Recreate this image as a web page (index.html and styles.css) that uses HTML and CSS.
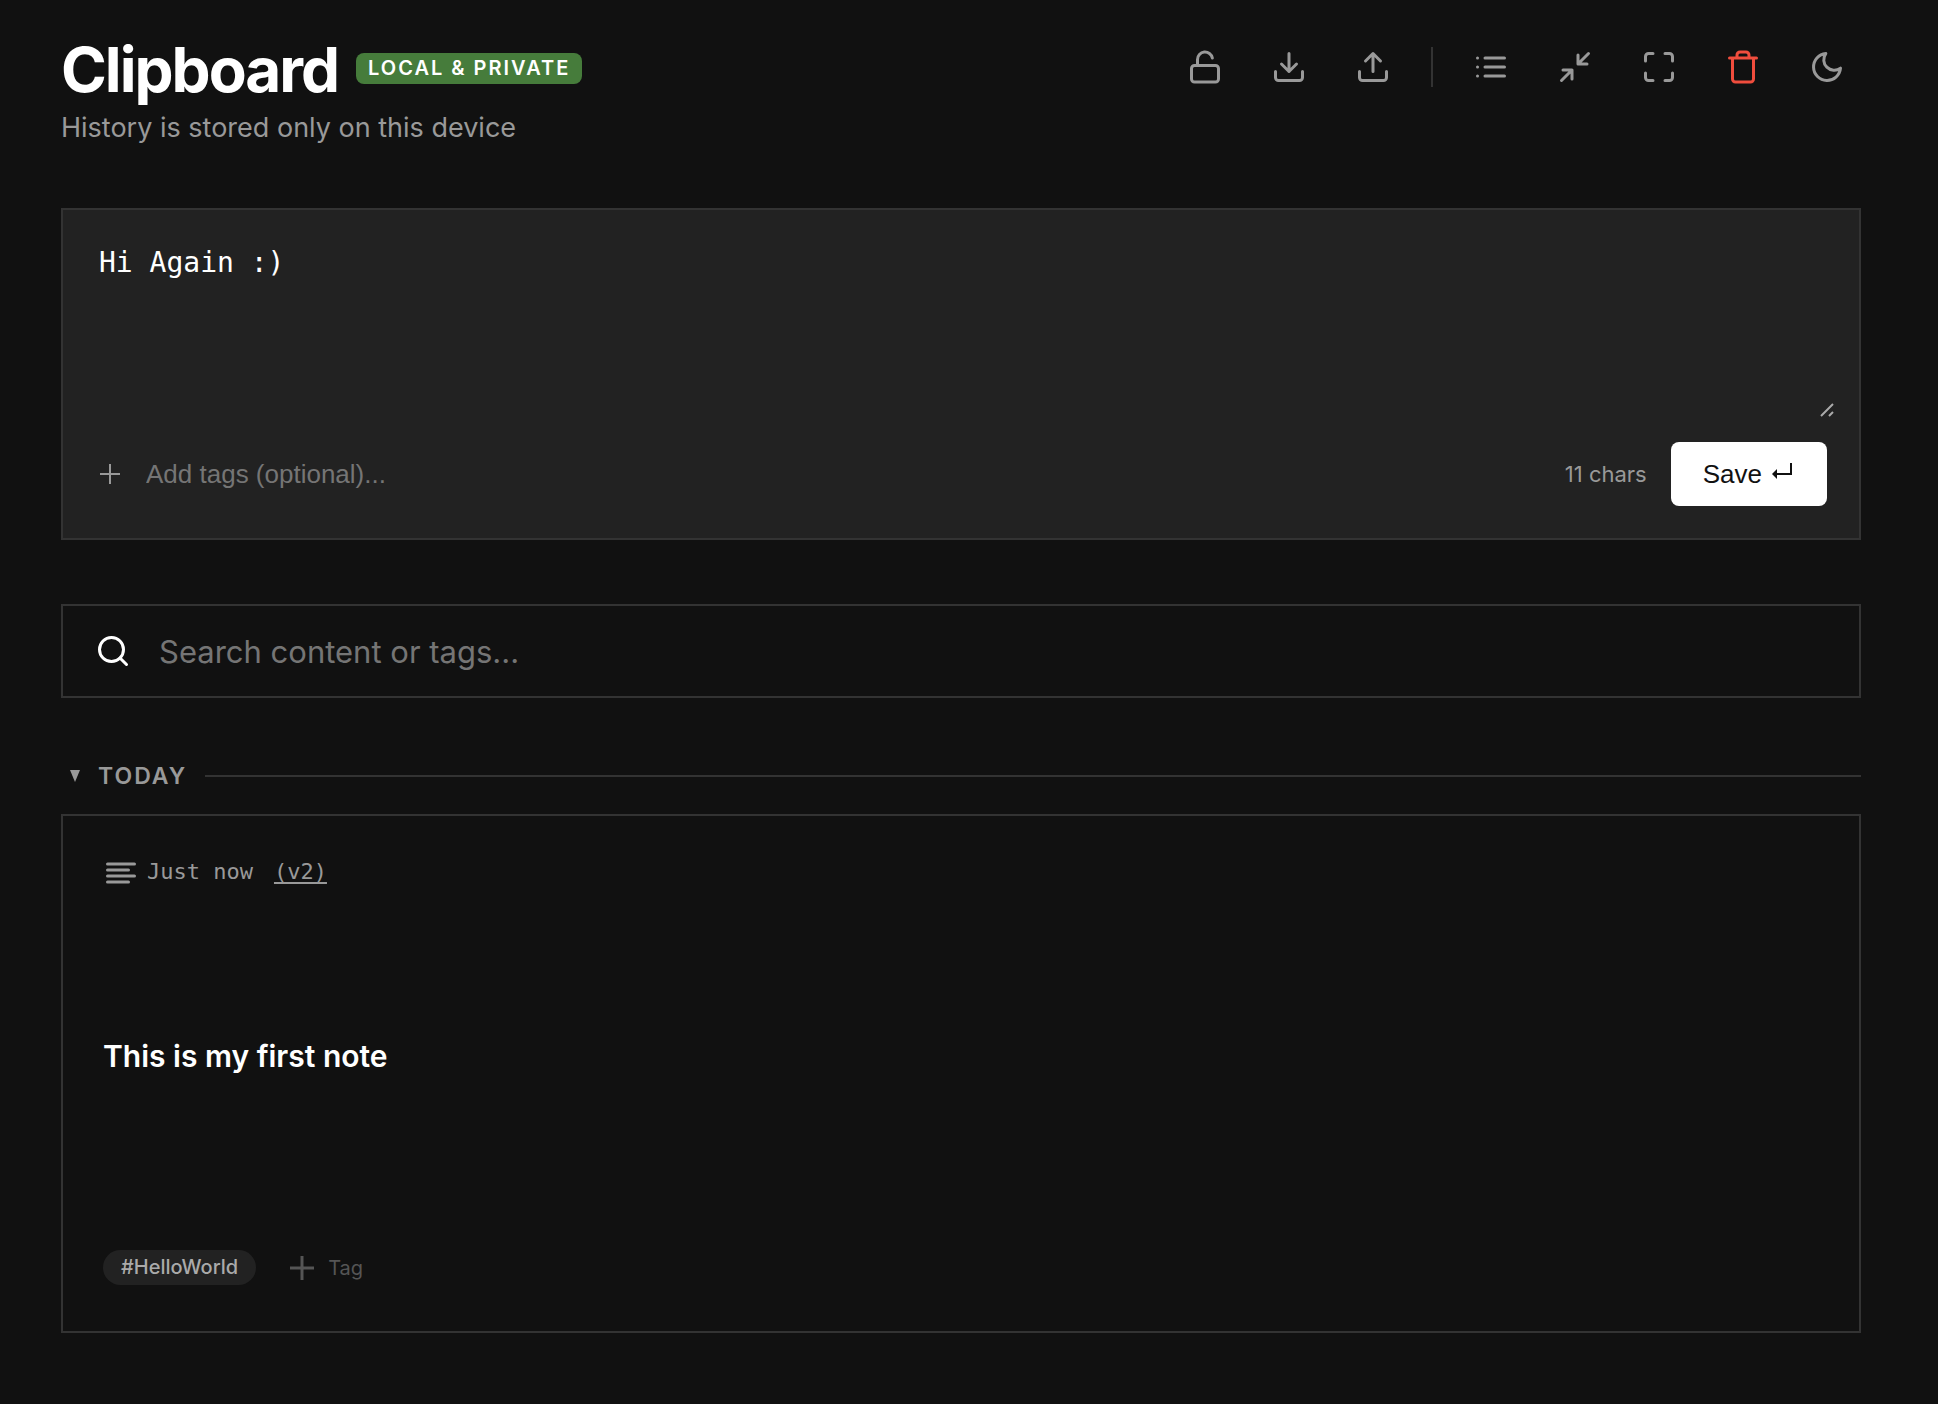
FILE: index.html
```html
<!DOCTYPE html>
<html lang="en">
<head>
    <meta charset="UTF-8">
    <meta name="viewport" content="width=device-width, initial-scale=1.0">
    <title>Clipboard</title>
    <link rel="stylesheet" href="styles.css">
</head>
<body>
    <header class="header">
        <div class="brand">
            <div class="title-row">
                <h1>Clipboard</h1>
                <span class="badge">LOCAL &amp; PRIVATE</span>
            </div>
            <p class="subtitle">History is stored only on this device</p>
        </div>
        <div class="toolbar">
            <button class="icon-button" type="button" aria-label="Lock">
                <svg class="icon" viewBox="0 0 24 24"><rect x="3" y="11" width="18" height="11" rx="2"/><path d="M7 11V7a5 5 0 0 1 9.9-1"/></svg>
            </button>
            <button class="icon-button" type="button" aria-label="Export">
                <svg class="icon" viewBox="0 0 24 24"><path d="M21 15v4a2 2 0 0 1-2 2H5a2 2 0 0 1-2-2v-4M7 10l5 5 5-5M12 15V3"/></svg>
            </button>
            <button class="icon-button" type="button" aria-label="Import">
                <svg class="icon" viewBox="0 0 24 24"><path d="M21 15v4a2 2 0 0 1-2 2H5a2 2 0 0 1-2-2v-4M17 8l-5-5-5 5M12 3v12"/></svg>
            </button>
            <span class="separator"></span>
            <button class="icon-button" type="button" aria-label="List view">
                <svg class="icon" viewBox="0 0 24 24"><path d="M8 6h13M8 12h13M8 18h13M3 6h.01M3 12h.01M3 18h.01"/></svg>
            </button>
            <button class="icon-button" type="button" aria-label="Compact">
                <svg class="icon" viewBox="0 0 24 24"><path d="M4 14h6v6M20 10h-6V4M14 10l7-7M3 21l7-7"/></svg>
            </button>
            <button class="icon-button" type="button" aria-label="Fullscreen">
                <svg class="icon" viewBox="0 0 24 24"><path d="M8 3H5a2 2 0 0 0-2 2v3m18 0V5a2 2 0 0 0-2-2h-3m0 18h3a2 2 0 0 0 2-2v-3M3 16v3a2 2 0 0 0 2 2h3"/></svg>
            </button>
            <button class="icon-button danger" type="button" aria-label="Clear all">
                <svg class="icon" viewBox="0 0 24 24"><path d="M3 6h18M19 6v14a2 2 0 0 1-2 2H7a2 2 0 0 1-2-2V6m3 0V4a2 2 0 0 1 2-2h4a2 2 0 0 1 2 2v2"/></svg>
            </button>
            <button class="icon-button" type="button" aria-label="Dark mode">
                <svg class="icon" viewBox="0 0 24 24"><path d="M21 12.79A9 9 0 1 1 11.21 3 7 7 0 0 0 21 12.79z"/></svg>
            </button>
        </div>
    </header>

    <main>
        <form class="composer">
            <div class="editor">
                <textarea id="noteInput" aria-label="Note">Hi Again :)</textarea>
                <svg class="resize-handle" viewBox="0 0 14 14"><path d="M1 13L13 1M9 13l4-4"/></svg>
            </div>
            <div class="composer-footer">
                <label class="tag-field">
                    <svg class="plus" viewBox="0 0 24 24"><path d="M12 2v20M2 12h20"/></svg>
                    <input id="tagInput" type="text" placeholder="Add tags (optional)..." aria-label="Tags">
                </label>
                <span class="char-count">11 chars</span>
                <button class="save-button" type="button">Save
                    <svg class="return" viewBox="0 0 20 16"><path class="line" d="M19 0v11H4"/><path class="head" d="M0 11l5-5v10z"/></svg>
                </button>
            </div>
        </form>

        <label class="search">
            <svg class="icon" viewBox="0 0 24 24"><circle cx="11" cy="11" r="8"/><path d="M21 21l-4.35-4.35"/></svg>
            <input id="searchInput" type="text" placeholder="Search content or tags..." aria-label="Search">
        </label>

        <section>
            <button class="group-header" type="button">
                <svg class="triangle" viewBox="0 0 10 12"><path d="M0 0h10L5 12z"/></svg>
                <span>TODAY</span>
                <span class="rule"></span>
            </button>
            <article class="card">
                <div class="card-meta">
                    <svg class="icon" viewBox="0 0 24 24"><path d="M21 6.6H3M17 10.6H3M21 14.6H3M17 18.6H3"/></svg>
                    <span>Just now</span>
                    <a href="#">(v2)</a>
                </div>
                <h2>This is my first note</h2>
                <div class="card-tags">
                    <span class="tag">#HelloWorld</span>
                    <button class="add-tag" type="button">
                        <svg class="plus" viewBox="0 0 24 24"><path d="M12 0v24M0 12h24"/></svg>
                        Tag
                    </button>
                </div>
            </article>
        </section>
    </main>
</body>
</html>
```
FILE: styles.css
```css
* {
    box-sizing: border-box;
}

body {
    margin: 0;
    padding: 32px 77px 64px 61px;
    background-color: #111;
    color: white;
    font-family: Inter, sans-serif;
}

h1, h2, p {
    margin: 0;
}

button, input, textarea {
    border: none;
    background: none;
    padding: 0;
    color: inherit;
    font-family: inherit;
    outline: none;
}

button {
    cursor: pointer;
}

svg {
    display: block;
    flex: none;
    fill: none;
    stroke: currentColor;
}

.icon {
    width: 36px;
    height: 36px;
    stroke-width: 2;
    stroke-linecap: round;
    stroke-linejoin: round;
}

.header {
    display: flex;
    justify-content: space-between;
    align-items: flex-start;
    margin-bottom: 60px;
}

.title-row {
    display: flex;
    align-items: center;
    gap: 18px;
}

h1 {
    font-size: 62px;
    line-height: 76px;
    font-weight: 700;
    letter-spacing: -2px;
}

.badge {
    margin-bottom: 3px;
    padding: 0 12px;
    border-radius: 8px;
    background-color: #467c3b;
    font-size: 20px;
    line-height: 31px;
    font-weight: 600;
    letter-spacing: 2px;
}

.subtitle {
    color: #999;
    font-size: 27px;
    line-height: 40px;
}

.toolbar {
    display: flex;
    align-items: center;
    gap: 16px;
}

.icon-button {
    display: flex;
    align-items: center;
    justify-content: center;
    width: 68px;
    height: 70px;
    color: #999;
}

.icon-button.danger {
    color: #f04d3d;
}

.separator {
    width: 2px;
    height: 40px;
    margin: 0 8px;
    background-color: #333;
}

.composer {
    margin-bottom: 64px;
    padding: 24px 24px 32px;
    border: 2px solid #333;
    background-color: #222;
}

.editor {
    position: relative;
    margin-bottom: 24px;
}

textarea {
    display: block;
    width: 100%;
    height: 184px;
    padding: 8px 12px;
    resize: none;
    font-family: "DejaVu Sans Mono", monospace;
    font-size: 28px;
    line-height: 42px;
}

.resize-handle {
    position: absolute;
    right: 1px;
    bottom: 1px;
    width: 14px;
    height: 14px;
    color: #aaa;
    stroke-width: 2;
}

.composer-footer {
    display: flex;
    align-items: center;
    gap: 24px;
    padding: 0 8px 0 11px;
}

.tag-field {
    display: flex;
    flex: 1;
    align-items: center;
    gap: 24px;
    color: #999;
}

.plus {
    width: 24px;
    height: 24px;
    stroke-width: 3;
}

.tag-field .plus {
    stroke-width: 2;
}

.tag-field input {
    flex: 1;
    font-family: "Liberation Sans", Arial, sans-serif;
    font-size: 26px;
}

::placeholder {
    color: #757575;
    opacity: 1;
}

.char-count {
    color: #999;
    font-size: 22px;
}

.save-button {
    display: flex;
    align-items: center;
    gap: 10px;
    height: 64px;
    padding: 0 35px 0 32px;
    border-radius: 8px;
    background-color: white;
    color: #111;
    font-family: "Liberation Sans", Arial, sans-serif;
    font-size: 26px;
}

.return {
    width: 20px;
    height: 16px;
    margin-bottom: 6px;
}

.return .line {
    stroke-width: 2;
}

.return .head {
    fill: currentColor;
    stroke: none;
}

.search {
    display: flex;
    align-items: center;
    gap: 28px;
    height: 94px;
    margin-bottom: 62px;
    padding: 0 32px;
    border: 2px solid #333;
}

.search input {
    flex: 1;
    font-size: 31px;
}

.group-header {
    display: flex;
    align-items: center;
    width: 100%;
    height: 32px;
    margin-bottom: 22px;
    padding-left: 9px;
    gap: 18px;
    color: #999;
    font-size: 23px;
    font-weight: 600;
    letter-spacing: 2px;
}

.triangle {
    width: 10px;
    height: 12px;
    fill: currentColor;
    stroke: none;
}

.rule {
    flex: 1;
    height: 2px;
    background-color: #333;
}

.card {
    padding: 38px 40px 46px;
    border: 2px solid #333;
}

.card-meta {
    display: flex;
    align-items: center;
    gap: 8px;
    color: #999;
    font-family: "DejaVu Sans Mono", monospace;
    font-size: 22px;
    line-height: 32px;
}

.card-meta a {
    margin-left: 13px;
    color: inherit;
    text-underline-offset: 3px;
}

h2 {
    padding: 146px 0 174px;
    font-size: 30px;
    line-height: 40px;
    font-weight: 600;
}

.card-tags {
    display: flex;
    align-items: center;
    gap: 34px;
}

.tag {
    padding: 0 18px;
    border-radius: 18px;
    background-color: #222;
    color: #aaa;
    font-size: 20px;
    line-height: 35px;
    font-weight: 500;
}

.add-tag {
    display: flex;
    align-items: center;
    gap: 14px;
    color: #555;
    font-size: 20px;
}
```
